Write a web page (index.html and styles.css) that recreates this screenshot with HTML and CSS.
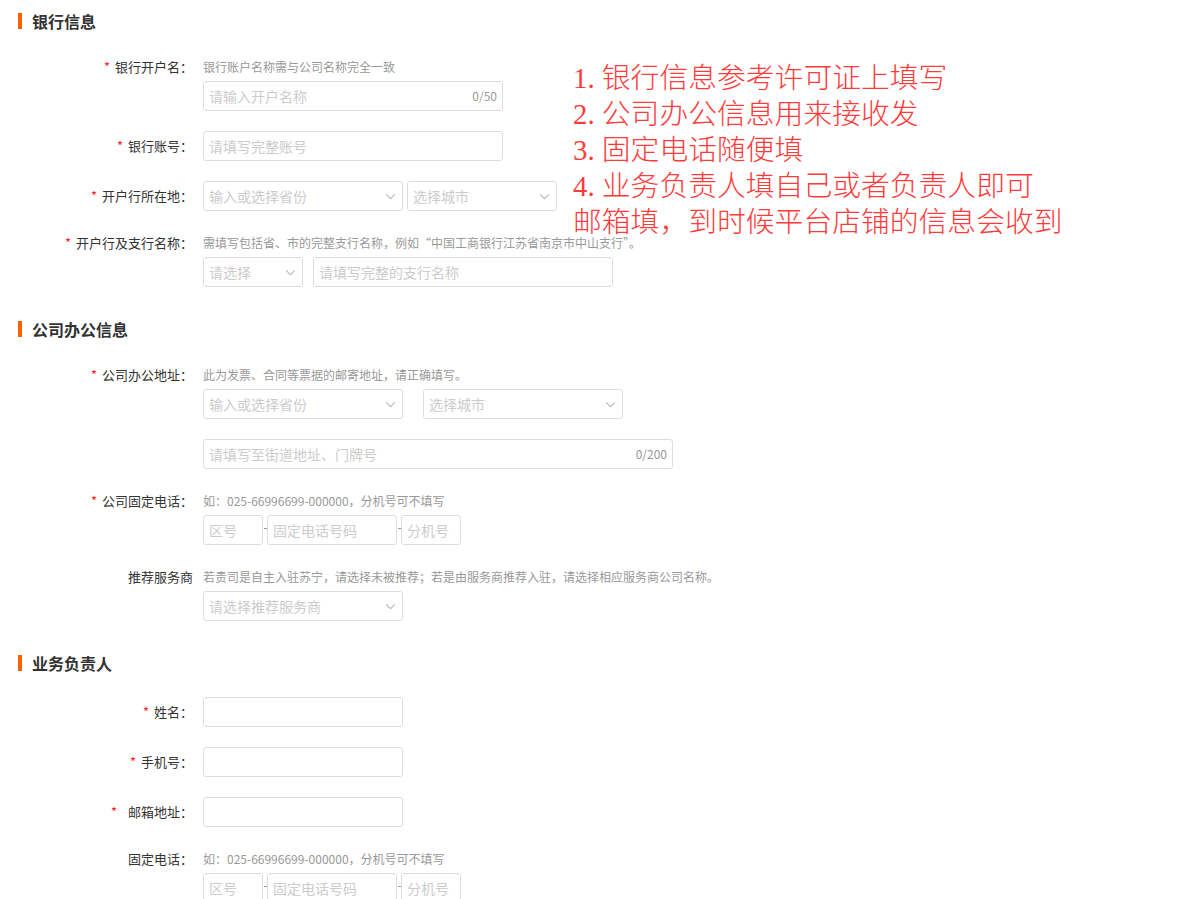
FILE: index.html
```html
<!DOCTYPE html>
<html lang="zh-CN">
<head>
<meta charset="utf-8">
<title>信息填写</title>
<link rel="stylesheet" href="styles.css">
</head>
<body>
<div class="page">

  <section class="sec">
    <h2 class="sec-title"><i class="bar"></i>银行信息</h2>

    <div class="row">
      <div class="label lh-hint"><span class="req">*</span>银行开户名：</div>
      <div class="ctl">
        <div class="hint">银行账户名称需与公司名称完全一致</div>
        <div class="field w300">
          <input class="inp" type="text" placeholder="请输入开户名称">
          <span class="count">0/50</span>
        </div>
      </div>
    </div>

    <div class="row">
      <div class="label"><span class="req">*</span>银行账号：</div>
      <div class="ctl">
        <div class="field w300"><input class="inp" type="text" placeholder="请填写完整账号"></div>
      </div>
    </div>

    <div class="row">
      <div class="label"><span class="req">*</span>开户行所在地：</div>
      <div class="ctl line g4">
        <div class="select w200"><span class="ph">输入或选择省份</span><svg class="arr" viewBox="0 0 12 8"><path d="M1 1.5l5 5 5-5"/></svg></div>
        <div class="select w150"><span class="ph">选择城市</span><svg class="arr" viewBox="0 0 12 8"><path d="M1 1.5l5 5 5-5"/></svg></div>
      </div>
    </div>

    <div class="row">
      <div class="label lh-hint"><span class="req">*</span>开户行及支行名称：</div>
      <div class="ctl">
        <div class="hint">需填写包括省、市的完整支行名称，例如“中国工商银行江苏省南京市中山支行”。</div>
        <div class="line g10">
          <div class="select w100"><span class="ph">请选择</span><svg class="arr" viewBox="0 0 12 8"><path d="M1 1.5l5 5 5-5"/></svg></div>
          <div class="field w300"><input class="inp" type="text" placeholder="请填写完整的支行名称"></div>
        </div>
      </div>
    </div>
  </section>

  <section class="sec">
    <h2 class="sec-title"><i class="bar"></i>公司办公信息</h2>

    <div class="row">
      <div class="label lh-hint"><span class="req">*</span>公司办公地址：</div>
      <div class="ctl">
        <div class="hint">此为发票、合同等票据的邮寄地址，请正确填写。</div>
        <div class="line g20">
          <div class="select w200"><span class="ph">输入或选择省份</span><svg class="arr" viewBox="0 0 12 8"><path d="M1 1.5l5 5 5-5"/></svg></div>
          <div class="select w200"><span class="ph">选择城市</span><svg class="arr" viewBox="0 0 12 8"><path d="M1 1.5l5 5 5-5"/></svg></div>
        </div>
      </div>
    </div>

    <div class="row">
      <div class="label"></div>
      <div class="ctl">
        <div class="field w470">
          <input class="inp" type="text" placeholder="请填写至街道地址、门牌号">
          <span class="count">0/200</span>
        </div>
      </div>
    </div>

    <div class="row">
      <div class="label lh-hint"><span class="req">*</span>公司固定电话：</div>
      <div class="ctl">
        <div class="hint">如：025-66996699-000000，分机号可不填写</div>
        <div class="line">
          <div class="field w60"><input class="inp" type="text" placeholder="区号"></div>
          <span class="dash"></span>
          <div class="field w130"><input class="inp" type="text" placeholder="固定电话号码"></div>
          <span class="dash"></span>
          <div class="field w60"><input class="inp" type="text" placeholder="分机号"></div>
        </div>
      </div>
    </div>

    <div class="row">
      <div class="label lh-hint">推荐服务商</div>
      <div class="ctl">
        <div class="hint">若贵司是自主入驻苏宁，请选择未被推荐；若是由服务商推荐入驻，请选择相应服务商公司名称。</div>
        <div class="select w200"><span class="ph">请选择推荐服务商</span><svg class="arr" viewBox="0 0 12 8"><path d="M1 1.5l5 5 5-5"/></svg></div>
      </div>
    </div>
  </section>

  <section class="sec">
    <h2 class="sec-title"><i class="bar"></i>业务负责人</h2>

    <div class="row">
      <div class="label"><span class="req">*</span>姓名：</div>
      <div class="ctl"><div class="field w200"><input class="inp" type="text"></div></div>
    </div>

    <div class="row">
      <div class="label"><span class="req">*</span>手机号：</div>
      <div class="ctl"><div class="field w200"><input class="inp" type="text"></div></div>
    </div>

    <div class="row">
      <div class="label"><span class="req wide">*</span>邮箱地址：</div>
      <div class="ctl"><div class="field w200"><input class="inp" type="text"></div></div>
    </div>

    <div class="row">
      <div class="label lh-hint">固定电话：</div>
      <div class="ctl">
        <div class="hint">如：025-66996699-000000，分机号可不填写</div>
        <div class="line">
          <div class="field w60"><input class="inp" type="text" placeholder="区号"></div>
          <span class="dash"></span>
          <div class="field w130"><input class="inp" type="text" placeholder="固定电话号码"></div>
          <span class="dash"></span>
          <div class="field w60"><input class="inp" type="text" placeholder="分机号"></div>
        </div>
      </div>
    </div>
  </section>

  <div class="note">
    <p><span class="num">1.</span>银行信息参考许可证上填写</p>
    <p><span class="num">2.</span>公司办公信息用来接收发</p>
    <p><span class="num">3.</span>固定电话随便填</p>
    <p><span class="num">4.</span>业务负责人填自己或者负责人即可</p>
    <p>邮箱填，到时候平台店铺的信息会收到</p>
  </div>
</div>
</body>
</html>
```

FILE: styles.css
```css
* { box-sizing: border-box; }

html, body {
  margin: 0;
  padding: 0;
  background: #fff;
}

body {
  font-family: "Noto Sans CJK SC", "Microsoft YaHei", sans-serif;
  color: #333;
  font-size: 13px;
}

.page {
  position: relative;
  padding-top: 11px;
}

.sec {
  display: flow-root;
}

.sec + .sec {
  padding-top: 12px;
}

.sec-title {
  display: flex;
  align-items: center;
  height: 20px;
  margin: 0 0 24px 0;
  padding-left: 18px;
  font-size: 16px;
  font-weight: 700;
  color: #333;
  line-height: 20px;
}

.bar {
  display: block;
  width: 4px;
  height: 16px;
  background: #ff6000;
  margin-right: 10px;
}

.row {
  display: grid;
  grid-template-columns: 193px 1fr;
  column-gap: 10px;
  margin-bottom: 20px;
}

.label {
  text-align: right;
  white-space: nowrap;
  font-size: 13px;
  line-height: 30px;
  color: #333;
}

.label.lh-hint {
  line-height: 24px;
}

.req {
  color: #f22;
  margin-right: 5px;
}

.req.wide {
  margin-right: 11px;
}

.ctl {
  min-width: 0;
}

.hint {
  font-size: 12px;
  line-height: 24px;
  color: #999;
  margin-bottom: 2px;
  white-space: nowrap;
}

.line {
  display: flex;
  align-items: center;
}

.g4 { gap: 4px; }
.g10 { gap: 10px; }
.g20 { gap: 20px; }

.field,
.select {
  display: flex;
  align-items: center;
  height: 30px;
  border: 1px solid #ddd;
  border-radius: 3px;
  background: #fff;
}

.w60 { width: 60px; }
.w100 { width: 100px; }
.w130 { width: 130px; }
.w150 { width: 150px; }
.w200 { width: 200px; }
.w300 { width: 300px; }
.w470 { width: 470px; }

.inp {
  flex: 1;
  min-width: 0;
  height: 28px;
  border: 0;
  outline: none;
  padding: 0 5px;
  background: transparent;
  font-family: "Noto Sans CJK SC", sans-serif;
  font-size: 14px;
  color: #333;
}

.inp::placeholder {
  color: #ccc;
}

.count {
  font-size: 12px;
  color: #999;
  padding-right: 5px;
  line-height: 28px;
}

.select {
  justify-content: space-between;
  padding: 0 5px;
}

.ph {
  font-size: 14px;
  color: #ccc;
  white-space: nowrap;
}

.arr {
  width: 11px;
  height: 7px;
  fill: none;
  stroke: #b8b8b8;
  stroke-width: 1.2;
  margin-right: 1px;
}

.dash {
  display: block;
  width: 4px;
  height: 30px;
}

.dash::after {
  content: "";
  display: block;
  width: 3px;
  height: 1px;
  background: #999;
  margin: 13px auto 0;
}

.note {
  position: absolute;
  left: 573px;
  top: 60px;
  font-family: "Liberation Serif", "Noto Sans CJK SC", serif;
  font-size: 28.8px;
  font-weight: 300;
  line-height: 36px;
  color: #ff3b3b;
  white-space: nowrap;
}

.note p {
  margin: 0;
}

.num {
  display: inline-block;
  width: 1em;
}
```
